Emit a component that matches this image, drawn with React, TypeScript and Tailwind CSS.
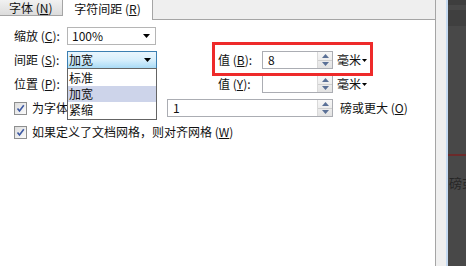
import React from 'react'

function Arrow({ color = '#000' }: { color?: string }) {
  return (
    <svg width="7" height="4" viewBox="0 0 7 4">
      <path d="M0 0 L7 0 L3.5 4 Z" fill={color} />
    </svg>
  )
}

function Spin() {
  return (
    <div className="flex w-[15px] flex-col border-l border-[#d9d9d9] bg-gradient-to-b from-[#f7f7f7] to-[#e3e3e3]">
      <div className="flex flex-1 items-center justify-center border-b border-[#cfcfcf]">
        <svg width="7" height="4" viewBox="0 0 7 4"><path d="M0 4 L3.5 0 L7 4 Z" fill="#5a7096" /></svg>
      </div>
      <div className="flex flex-1 items-center justify-center">
        <svg width="7" height="4" viewBox="0 0 7 4"><path d="M0 0 L7 0 L3.5 4 Z" fill="#5a7096" /></svg>
      </div>
    </div>
  )
}

function NumBox({ value, width }: { value: string; width: string }) {
  return (
    <div className={`flex h-[18px] shrink-0 border border-[#abadb3] bg-white ${width}`}>
      <div className="flex-1 pl-[5px] leading-[16px]">{value}</div>
      <Spin />
    </div>
  )
}

function Check() {
  return (
    <div className="flex h-[13px] w-[13px] shrink-0 items-center justify-center border border-[#8e8f8f] bg-gradient-to-br from-[#dcdcdc] to-[#fbfbfb]">
      <svg width="9" height="9" viewBox="0 0 9 9">
        <path d="M1.5 4.5 L3.5 7 L7.8 1.2" stroke="#3d59a3" strokeWidth="1.6" fill="none" />
      </svg>
    </div>
  )
}

function Unit() {
  return (
    <div className="flex items-center gap-[1px]">
      <span>毫米</span>
      <svg width="5" height="3" viewBox="0 0 5 3"><path d="M0 0 L5 0 L2.5 3 Z" fill="#000" /></svg>
    </div>
  )
}

export default function App() {
  return (
    <div className="flex h-[266px] w-[466px] overflow-hidden whitespace-nowrap bg-white font-['Noto_Sans_CJK_SC',sans-serif] text-[12px] leading-[18px] text-[#111]">
      {/* dialog */}
      <div className="flex w-[436px] shrink-0 flex-col">
        {/* tabs */}
        <div className="flex h-[20px] bg-[#efefef]">
          <div className="flex w-[63px] flex-col bg-white">
            <div className="flex h-[16px] items-center border-r border-b border-[#a5a5a5] bg-gradient-to-b from-[#f1f1f1] to-[#dcdcdc] pl-[9px] leading-[15px]">
              字体 (<u>N</u>)
            </div>
          </div>
          <div className="flex w-[90px] justify-center border-r border-[#a5a5a5] bg-white pt-[1px] leading-[15px]">
            字符间距 (<u>R</u>)
          </div>
          <div className="flex-1 border-b border-r border-[#a5a5a5] bg-[#efefef]" />
        </div>

        {/* panel */}
        <div className="relative flex flex-1 flex-col gap-[6px] border-r border-[#a5a5a5] bg-white pt-[7px]">
          <div className="flex h-[18px] items-center">
            <div className="w-[67px] shrink-0 pl-[14px]">缩放 (<u>C</u>):</div>
            <div className="flex h-[18px] w-[89px] items-center justify-between border border-[#b5b5b5] bg-white pr-[5px] pl-[4px]">
              <span>100%</span>
              <Arrow />
            </div>
          </div>

          <div className="flex h-[18px] items-center">
            <div className="w-[67px] shrink-0 pl-[14px]">间距 (<u>S</u>):</div>
            <div className="flex h-[18px] w-[90px] shrink-0 items-center justify-between border border-[#3c7fb1] bg-gradient-to-b from-[#eaf6fd] via-[#d7effc] to-[#a9dbf6] pr-[5px] pl-[1px]">
              <span>加宽</span>
              <Arrow />
            </div>
            <div className="ml-[61px] w-[44px] shrink-0">值 (<u>B</u>):</div>
            <NumBox value="8" width="w-[71px]" />
            <div className="ml-[4px]"><Unit /></div>
          </div>

          <div className="flex h-[18px] items-center">
            <div className="w-[67px] shrink-0 pl-[14px]">位置 (<u>P</u>):</div>
            <div className="w-[151px] shrink-0" />
            <div className="w-[44px] shrink-0">值 (<u>Y</u>):</div>
            <NumBox value="" width="w-[71px]" />
            <div className="ml-[4px]"><Unit /></div>
          </div>

          <div className="flex h-[18px] items-center">
            <div className="flex w-[167px] shrink-0 items-center gap-[5px] overflow-hidden pl-[14px]">
              <Check />
              <span>为字体调整字间距 (<u>K</u>):</span>
            </div>
            <NumBox value="1" width="w-[166px]" />
            <div className="ml-[7px]">磅或更大 (<u>O</u>)</div>
          </div>

          <div className="flex h-[18px] items-center gap-[5px] pl-[14px]">
            <Check />
            <span>如果定义了文档网格，则对齐网格 (<u>W</u>)</span>
          </div>

          {/* open dropdown list */}
          <div className="absolute top-[48px] left-[67px] flex w-[90px] flex-col border border-[#646464] bg-white py-[1px]">
            <div className="h-[16px] pl-[1px] leading-[16px]">标准</div>
            <div className="h-[16px] bg-[#cdd4ea] pl-[1px] leading-[16px]">加宽</div>
            <div className="h-[16px] pl-[1px] leading-[16px]">紧缩</div>
          </div>

          {/* annotation */}
          <div className="absolute top-[22px] left-[212px] h-[34px] w-[161px] border-[3px] border-[#ee2a2a]" />
        </div>
      </div>

      {/* right edge: window frame and background app */}
      <div className="w-[10px] shrink-0 bg-[#efefef]" />
      <div className="w-[2px] shrink-0 bg-[#c5daf1]" />
      <div className="flex min-w-0 flex-1 flex-col overflow-hidden bg-[#484848]">
        <div className="h-[5px] bg-[#3e3e3e]" />
        <div className="mt-[5px] h-[16px] bg-[#3f3f3f]" />
        <div className="mt-[128px] h-[2px] bg-[#6b2a2a]" />
        <div className="mt-[18px] pl-[1px] text-[13px] text-[#262626]">磅或更大</div>
      </div>
    </div>
  )
}
